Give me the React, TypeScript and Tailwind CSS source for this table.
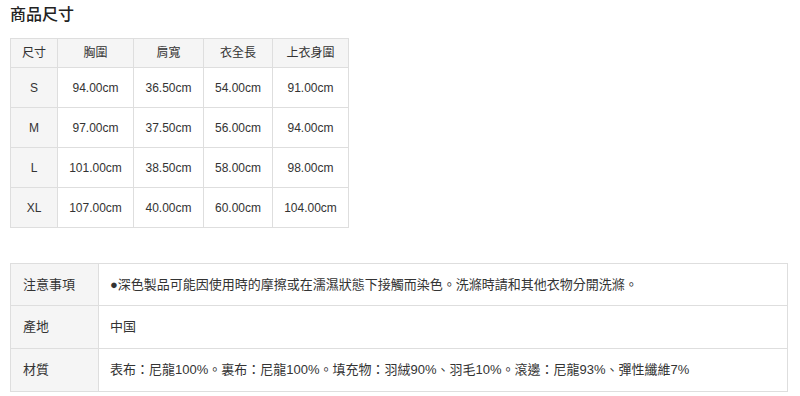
const font = { fontFamily: '"Liberation Sans", "Noto Sans CJK TC", sans-serif' };

const sizeHead = ["尺寸", "胸圍", "肩寬", "衣全長", "上衣身圍"];
const sizeRows = [
  ["S", "94.00cm", "36.50cm", "54.00cm", "91.00cm"],
  ["M", "97.00cm", "37.50cm", "56.00cm", "94.00cm"],
  ["L", "101.00cm", "38.50cm", "58.00cm", "98.00cm"],
  ["XL", "107.00cm", "40.00cm", "60.00cm", "104.00cm"],
];
const colW = ["w-[47px]", "w-[76px]", "w-[70px]", "w-[69px]", "w-[76px]"];

const info = [
  ["注意事項", "●深色製品可能因使用時的摩擦或在濡濕狀態下接觸而染色。洗滌時請和其他衣物分開洗滌。"],
  ["產地", "中国"],
  ["材質", "表布：尼龍100%。裏布：尼龍100%。填充物：羽絨90%、羽毛10%。滾邊：尼龍93%、彈性纖維7%"],
];

export default function App() {
  return (
    <div className="w-[800px] h-[396px] bg-white px-[10px] pt-[4px] text-[#333]" style={font}>
      <h2 className="text-[16px] leading-[22px] font-medium text-[#222]">商品尺寸</h2>
      <table className="mt-[12px] border-collapse text-[12px] table-fixed">
        <thead>
          <tr className="h-[29px]">
            {sizeHead.map((h, i) => (
              <th key={h} className={`${colW[i]} border border-[#dedede] bg-[#f5f5f5] font-normal text-center p-0`}>
                {h}
              </th>
            ))}
          </tr>
        </thead>
        <tbody>
          {sizeRows.map((row) => (
            <tr key={row[0]} className="h-[40px]">
              {row.map((c, i) => (
                <td
                  key={i}
                  className={`border border-[#dedede] text-center p-0 ${i === 0 ? "bg-[#f5f5f5]" : "bg-white"}`}
                >
                  {c}
                </td>
              ))}
            </tr>
          ))}
        </tbody>
      </table>

      <table className="mt-[35px] w-[778px] border-collapse text-[13px]">
        <tbody>
          {info.map(([k, v], i) => (
            <tr key={k} className={i === 0 ? "h-[42px]" : "h-[43px]"}>
              <th className="w-[88px] border border-[#dedede] bg-[#f5f5f5] font-normal text-left pl-[12px]">{k}</th>
              <td className="border border-[#dedede] pl-[11px]">{v}</td>
            </tr>
          ))}
        </tbody>
      </table>
    </div>
  );
}
